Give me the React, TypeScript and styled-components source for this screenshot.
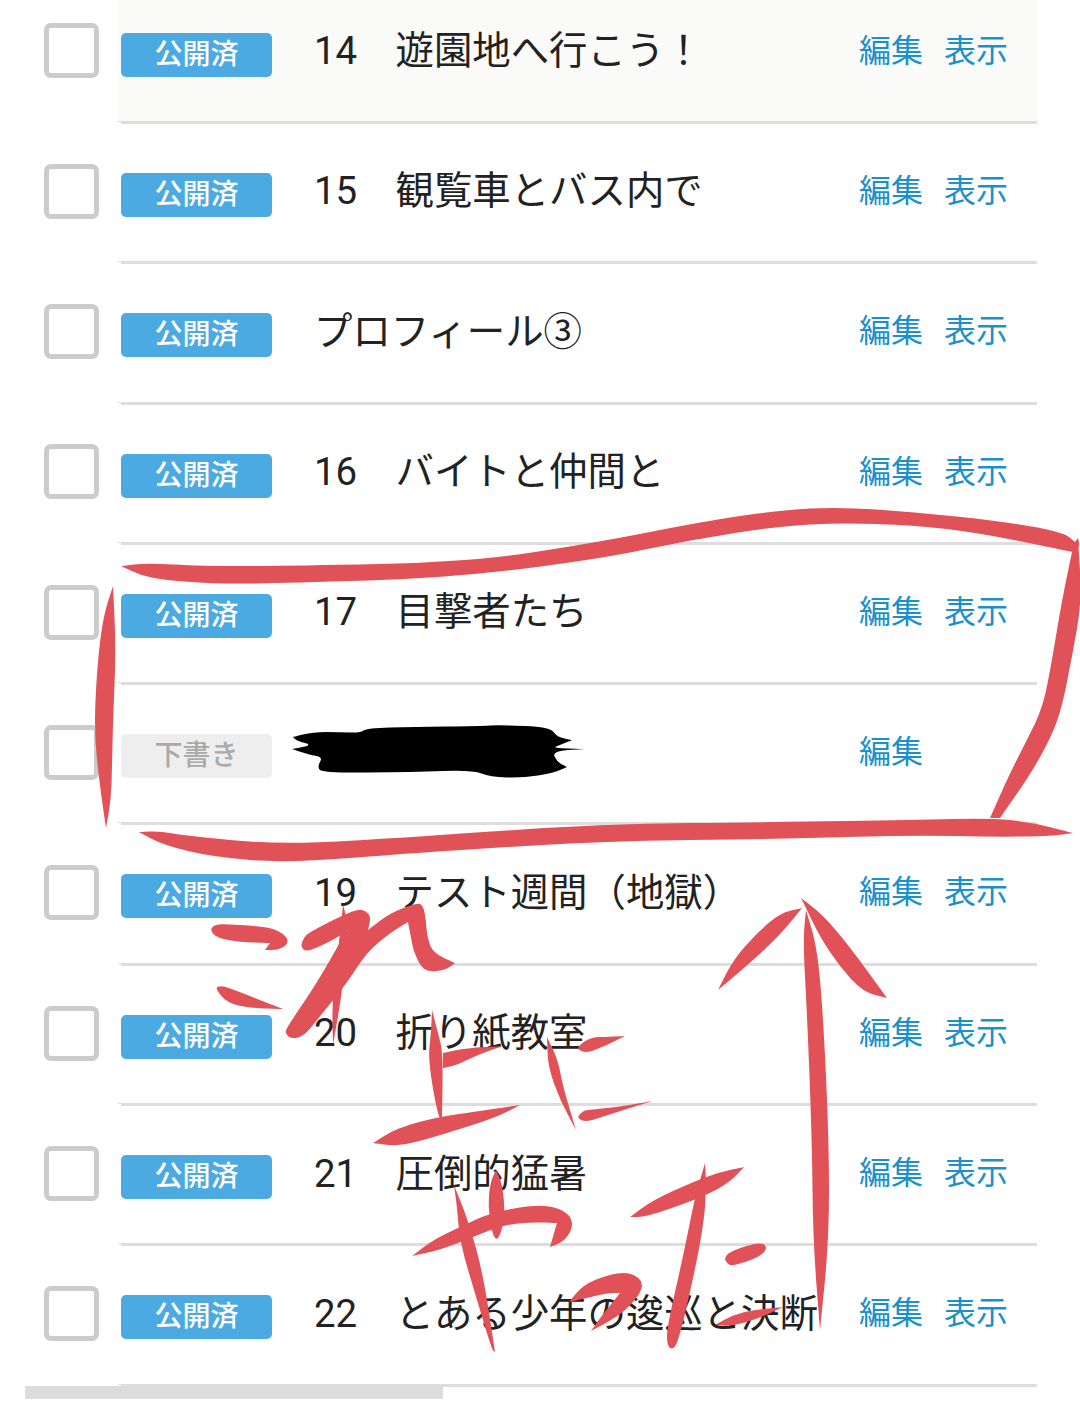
import styled, { createGlobalStyle } from "styled-components";

interface IChapter {
  title: string;
  draft?: boolean;
  current?: boolean;
}

const chapters: IChapter[] = [
  { title: "14　遊園地へ行こう！", current: true },
  { title: "15　観覧車とバス内で" },
  { title: "プロフィール③" },
  { title: "16　バイトと仲間と" },
  { title: "17　目撃者たち" },
  { title: "", draft: true },
  { title: "19　テスト週間（地獄）" },
  { title: "20　折り紙教室" },
  { title: "21　圧倒的猛暑" },
  { title: "22　とある少年の逡巡と決断" },
];

// hand drawn marks in page pixels, "!" keeps a point as a sharp tip
const redMarks = [
  // box
  "121,566! 147,563 200,566 287,566 470,562 600,542 700,522 780,510 840,507 913,512 1000,521 1063,532 1075,542! 1078,538! 1080,547 1073,552! 980,533 913,525 840,523 780,526 690,540 600,559 450,578 287,583 220,584 163,580 140,575",
  "1078,540! 1082,600 1072,657 1062,707 1052,735 1032,772 1000,818! 990,818! 1010,773 1027,740 1043,707 1052,660 1062,600 1072,552!",
  "139,832! 160,831 180,835 280,845 413,837 600,824 780,822 913,820 990,818 1030,822 1073,833! 1053,836 997,837 913,835 780,839 600,841 413,853 287,863 213,857 163,845",
  "113,586! 116,650 113,720 112,767 111,800 106,828! 100,787 94,733 97,667 103,617",
  // これ
  "210,930 214,925 223,924 257,926 276,929 288,938 287,945 278,950 265,950! 270,943! 240,942 217,938",
  "215,988 220,986 227,987 247,995 283,1009! 250,1008 227,1003",
  "343,905! 346,915 347,933 343,987 333,1045! 332,1000 337,960",
  "301,945 304,937 310,932 337,918 358,909 366,911 371,917 368,930! 390,913 417,903 423,905 426,920 427,937 433,953 455,963! 447,969 433,972 422,969 414,952 412,943 408,922! 390,933 367,952 347,983 317,1020 304,1036 292,1039 285,1034 287,1027 317,983 347,930! 337,938 310,951 303,950",
  // 上に
  "432,1010! 438,1033 443,1053 442,1118! 438,1117 428,1060 431,1033",
  "443,1053! 467,1048 503,1046! 477,1055 457,1065 443,1068!",
  "373,1143! 397,1128 438,1117 473,1112 520,1105! 497,1117 457,1130 417,1142 395,1146",
  "547,1037! 558,1060 563,1087 576,1130! 560,1100 548,1067",
  "577,1048 583,1042 593,1037 603,1037 625,1036! 607,1045 590,1052 582,1052",
  "577,1117 583,1111 587,1110 617,1107 653,1101! 623,1110 590,1121 582,1121",
  // やった
  "454,1185! 468,1220 483,1273 495,1352! 492,1350 477,1300 460,1243 457,1207",
  "412,1256! 433,1240 460,1227 490,1213 533,1205 557,1207 572,1217 572,1230 563,1242 550,1247! 557,1223! 533,1222 503,1225 473,1237 440,1250",
  "496,1170! 502,1183 505,1210 502,1230 497,1241 492,1233 488,1207 490,1183",
  "569,1302! 583,1285 607,1275 627,1272 640,1278 643,1288 633,1303 617,1317 591,1331! 600,1318 620,1293! 607,1293 587,1298",
  "630,1217! 653,1200 693,1182 720,1172 744,1167! 730,1182 707,1195 667,1210 643,1217",
  "705,1163! 706,1177 705,1217 693,1280 678,1343 672,1350 667,1345 667,1327 683,1257 695,1197 700,1180",
  "724,1257 733,1250 760,1242 768,1247 760,1257 733,1266 727,1264",
  "715,1325! 733,1315 753,1310 783,1307! 760,1318 733,1326",
  // arrow
  "802,908! 780,913 757,933 733,960 718,990! 750,963 780,935",
  "801,898! 823,915 850,947 887,998! 863,992 840,967 820,937 807,910",
  "806,910! 817,947 823,1013 829,1140 829,1240 820,1330! 813,1240 812,1140 807,1013 803,940",
];

const redaction =
  "293,737! 313,732 340,732 360,733 367,728 413,727 480,726 500,725 550,727 557,737 572,740! 560,745 552,748 584,749! 552,751 557,762 567,767! 553,773 523,778 490,777 473,770 413,772 323,773 317,767 323,757 310,755 292,749! 313,745 297,741";

// rounds the corners of a point list through the midpoints
const smoothPath = (marks: string) => {
  const points: number[][] = [];
  marks.split(" ").forEach((mark) => {
    const point = mark.replace("!", "").split(",").map(Number);
    points.push(point);
    if (mark.endsWith("!")) points.push(point);
  });
  const mid = (a: number[], b: number[]) => `${(a[0] + b[0]) / 2} ${(a[1] + b[1]) / 2}`;
  let d = `M${mid(points[points.length - 1], points[0])}`;
  points.forEach((point, i) => {
    const next = points[(i + 1) % points.length];
    d += ` Q${point[0]} ${point[1]} ${mid(point, next)}`;
  });
  return d + " Z";
};

const App = () => {
  return (
    <Page>
      <GlobalStyle />
      <ChapterList>
        {chapters.map((item, i) => (
          <ChapterRow key={i}>
            <CheckBox />
            <RowBody $current={item.current}>
              <StatusBadge $draft={item.draft}>
                {item.draft ? "下書き" : "公開済"}
              </StatusBadge>
              <ChapterTitle>{item.title}</ChapterTitle>
              <LinkGroup>
                <ActionLink>編集</ActionLink>
                {!item.draft && <ActionLink>表示</ActionLink>}
              </LinkGroup>
            </RowBody>
          </ChapterRow>
        ))}
      </ChapterList>
      <ScrollThumb />
      <Marks viewBox="0 0 1080 1419" aria-hidden="true">
        {redMarks.map((marks, i) => (
          <path key={i} d={smoothPath(marks)} fill="#e05158" />
        ))}
        <path d={smoothPath(redaction)} fill="#000" />
      </Marks>
    </Page>
  );
};

export default App;

const GlobalStyle = createGlobalStyle`
  html, body {
    margin: 0;
    padding: 0;
    background: #fff;
    overflow: hidden;
  }
`;

const Page = styled.div`
  position: relative;
  width: 1080px;
  height: 1419px;
  overflow: hidden;
  font-family: Roboto, "Noto Sans CJK JP", sans-serif;
`;

const ChapterList = styled.ul`
  list-style: none;
  margin: -16.49px 0 0;
  padding: 0 43px 0 44px;
`;

const ChapterRow = styled.li`
  display: flex;
  align-items: stretch;
  height: 140.33px;
  box-sizing: border-box;
`;

const CheckBox = styled.span`
  flex: none;
  width: 55px;
  height: 55px;
  box-sizing: border-box;
  margin-top: 39.7px;
  margin-right: 19px;
  border: 5px solid #ccc;
  border-radius: 7px;
  background: #fff;
`;

const RowBody = styled.div<{ $current?: boolean }>`
  position: relative;
  flex: 1;
  display: flex;
  align-items: flex-start;
  padding: 49px 29px 0 3px;
  border-bottom: 3px solid #ddd;
  background: ${({ $current }) => ($current ? "#fafaf8" : "#fff")};

  &::after {
    content: "";
    position: absolute;
    left: 0;
    bottom: -3px;
    width: 3px;
    height: 2px;
    background: #fff;
  }
`;

const StatusBadge = styled.span<{ $draft?: boolean }>`
  flex: none;
  width: 151px;
  height: 44px;
  margin-right: 42px;
  border-radius: 5px;
  background: ${({ $draft }) => ($draft ? "#eee" : "#4caae2")};
  color: ${({ $draft }) => ($draft ? "#aaa" : "#fff")};
  font-size: 28px;
  font-weight: 500;
  line-height: 44px;
  text-align: center;
`;

const ChapterTitle = styled.span`
  flex: 1;
  margin-top: -10.5px;
  color: #222;
  font-size: 38.4px;
  line-height: 58px;
  white-space: nowrap;
`;

const LinkGroup = styled.div`
  flex: none;
  display: flex;
  gap: 21px;
  width: 149px;
  margin-top: -6px;
`;

const ActionLink = styled.a`
  flex: none;
  color: #1a90cc;
  font-size: 32px;
  line-height: 48px;
  white-space: nowrap;
`;

const ScrollThumb = styled.div`
  position: absolute;
  left: 25px;
  top: 1386px;
  width: 418px;
  height: 13px;
  background: #dcdcdc;
`;

const Marks = styled.svg`
  position: absolute;
  left: 0;
  top: 0;
  width: 1080px;
  height: 1419px;
  pointer-events: none;
`;
